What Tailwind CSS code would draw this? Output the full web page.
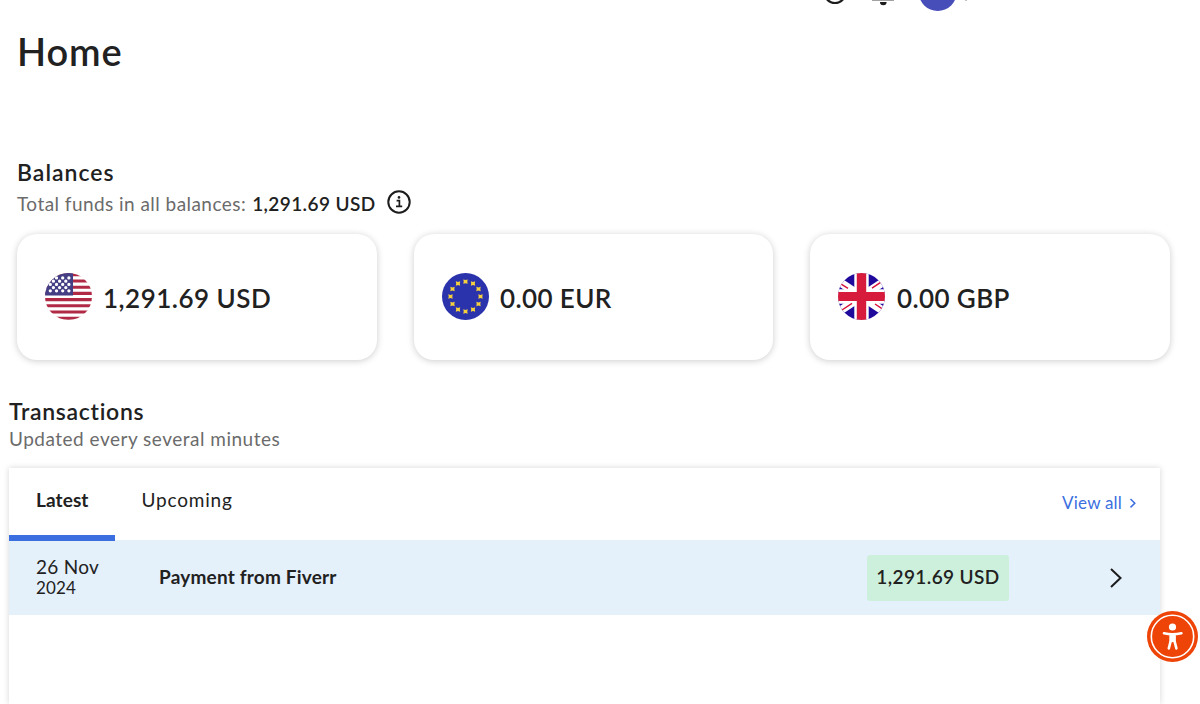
<!DOCTYPE html>
<html lang="en">
  <head>
    <meta charset="UTF-8" />
    <meta name="viewport" content="width=device-width, initial-scale=1.0" />
    <title>Home</title>
    <script src="https://cdn.jsdelivr.net/npm/@tailwindcss/browser@4"></script>
  </head>

  <body class="bg-white">
    <div
      class="relative w-[1200px] h-[704px] overflow-hidden flex flex-col font-['Lato',sans-serif] text-[#212121] whitespace-nowrap"
    >
      <!-- bottom edge of the top bar -->
      <header class="h-3 shrink-0 overflow-hidden flex items-end pl-[820px]">
        <svg class="w-[150px] h-3" viewBox="0 0 150 12" fill="none">
          <circle cx="15" cy="-7.5" r="10.5" stroke="#1c1c1c" stroke-width="2.2" />
          <path d="M52 0.2h22" stroke="#777" stroke-width="1" />
          <path d="M60 2h6.6a3.3 3.2 0 0 1-6.6 0z" fill="#1c1c1c" />
          <circle cx="117.7" cy="-8" r="19" fill="#474db9" />
          <path d="M144 -3l2 3 2-3" stroke="#555" stroke-width="1.2" />
        </svg>
      </header>

      <h1 class="mt-[15px] ml-[17px] h-12 leading-[48px] text-[38px] font-semibold tracking-[0.9px]">Home</h1>

      <section class="mt-[83px] pl-[17px]">
        <h2 class="h-7 leading-7 text-[23px] font-semibold tracking-[1px]">Balances</h2>
        <div class="flex items-center h-8 text-[19px] tracking-[0.45px]">
          <span class="pt-1 text-[#6b6b6b]">Total funds in all balances:</span>
          <span class="ml-[6px] pt-1 font-semibold tracking-[0.4px]">1,291.69 USD</span>
          <svg class="ml-[11px] w-6 h-6" viewBox="0 0 24 24" fill="none" stroke="#1c1c1c">
            <circle cx="12" cy="12" r="10.7" stroke-width="2" />
            <path d="M9.6 10.6h2.8v5.6M9 16.4h6.2" stroke-width="1.7" />
            <circle cx="12" cy="7.4" r="1.3" fill="#1c1c1c" stroke="none" />
          </svg>
        </div>

        <div class="mt-4 grid grid-cols-[359.5px_359.5px_359.5px] gap-x-[37px] text-[26px] font-semibold">
          <div class="h-[126px] pl-7 flex items-center gap-[11px] rounded-[20px] bg-white shadow-[0_1px_7px_rgba(0,0,0,0.2)]">
            <svg class="mb-px w-[47px] h-[47px]" viewBox="0 0 47 47">
              <clipPath id="us"><circle cx="23.5" cy="23.5" r="23.5" /></clipPath>
              <g clip-path="url(#us)">
                <path d="M0 0h47v47H0z" fill="#fff" />
                <path
                  d="M0 1.8h47M0 8h47M0 14.2h47M0 20.4h47M0 26.6h47M0 32.8h47M0 39h47M0 45.2h47"
                  stroke="#b12a45"
                  stroke-width="3.1"
                />
                <path d="M0 0h28v22.4H0z" fill="#443f85" />
                <g stroke="#fff" stroke-width="3.3" stroke-linecap="round">
                  <path d="M11.5 4.9h0M17.7 4.9h0M23.9 4.9h0" />
                  <path d="M8.4 8.2h0M14.6 8.2h0M20.8 8.2h0" />
                  <path d="M5.3 11.4h0M11.5 11.4h0M17.7 11.4h0M23.9 11.4h0" />
                  <path d="M8.4 14.6h0M14.6 14.6h0M20.8 14.6h0" />
                  <path d="M5.3 17.8h0M11.5 17.8h0M17.7 17.8h0M23.9 17.8h0" />
                </g>
              </g>
            </svg>
            <span class="pt-[3px] tracking-[0.5px]">1,291.69 USD</span>
          </div>

          <div class="h-[126px] pl-7 flex items-center gap-[11.5px] rounded-[20px] bg-white shadow-[0_1px_7px_rgba(0,0,0,0.2)]">
            <svg class="mb-px w-[47px] h-[47px]" viewBox="0 0 47 47">
              <defs>
                <path
                  id="star"
                  d="M-2.2-2.2L0-1.6 2.2-2.2 1.8 0 2.2 2.2 0 1.6-2.2 2.2-1.8 0z"
                  fill="#f5d13d"
                />
              </defs>
              <circle cx="23.5" cy="23.5" r="23.5" fill="#2a32ac" />
              <use href="#star" x="23.5" y="8.6" />
              <use href="#star" x="31" y="10.5" />
              <use href="#star" x="36.5" y="16" />
              <use href="#star" x="38.5" y="23.5" />
              <use href="#star" x="36.5" y="31" />
              <use href="#star" x="31" y="36.5" />
              <use href="#star" x="23.5" y="38.5" />
              <use href="#star" x="16" y="36.5" />
              <use href="#star" x="10.5" y="31" />
              <use href="#star" x="8.5" y="23.5" />
              <use href="#star" x="10.5" y="16" />
              <use href="#star" x="16" y="10.5" />
            </svg>
            <span class="pt-[3px] tracking-[0.4px]">0.00 EUR</span>
          </div>

          <div class="h-[126px] pl-7 flex items-center gap-3 rounded-[20px] bg-white shadow-[0_1px_7px_rgba(0,0,0,0.2)]">
            <svg class="mb-px w-[47px] h-[47px]" viewBox="0 0 47 47">
              <clipPath id="uk"><circle cx="23.5" cy="23.5" r="23.5" /></clipPath>
              <g clip-path="url(#uk)">
                <path d="M0 0h47v47H0z" fill="#1f0a9c" />
                <path d="M-8 2.5L55 44.5M55 2.5L-8 44.5" stroke="#fff" stroke-width="8" />
                <path d="M23.5 0v47M0 23.5h47" stroke="#fff" stroke-width="14.4" />
                <path d="M2 10.3l8 5M4 37l10-6.6M34 15.2l9-6M37 31l8 5.4" stroke="#d80f3a" stroke-width="1.4" />
                <path d="M23.5 0v47" stroke="#d61b3c" stroke-width="9.4" />
                <path d="M0 23.5h47" stroke="#d61b3c" stroke-width="9" />
              </g>
            </svg>
            <span class="pt-[3px] tracking-[0.4px]">0.00 GBP</span>
          </div>
        </div>
      </section>

      <section class="mt-[37px] pl-[9px] flex flex-col grow">
        <h2 class="h-7 leading-7 text-[23px] font-semibold tracking-[0.7px]">Transactions</h2>
        <p class="h-[26px] leading-7 text-[19px] tracking-[0.5px] text-[#6b6b6b]">Updated every several minutes</p>

        <div class="mt-[17px] w-[1151px] grow bg-white shadow-[0_0_6px_rgba(0,0,0,0.17)]">
          <div class="h-[72px] flex items-start">
            <button class="relative z-10 w-[106px] h-[73px] pl-[27px] pb-0.5 text-left text-[19px] font-bold tracking-[0.1px] border-b-[6px] border-[#3b6fe0]">Latest</button>
            <button class="ml-[26.5px] h-[65px] text-[19px] tracking-[0.8px]">Upcoming</button>
            <a class="ml-auto mr-[23px] h-[70px] flex items-center text-[17px] tracking-[0.2px] text-[#3b6fe0]">
              View all
              <svg class="ml-[7px] w-2 h-3" viewBox="0 0 8 12" fill="none" stroke="#3b6fe0" stroke-width="1.5">
                <path d="M1.5 2l4.3 4.2-4.3 4.2" />
              </svg>
            </a>
          </div>
          <div class="h-[75px] pl-[27px] flex items-center bg-[#e4f0fa]">
            <div class="w-[123px] pb-px leading-[21px]">
              <p class="text-[19px] tracking-[0.3px]">26 Nov</p>
              <p class="text-[17px] tracking-[0.1px]">2024</p>
            </div>
            <p class="w-[708px] text-[19px] font-bold tracking-[0.2px]">Payment from Fiverr</p>
            <p class="mt-px w-[142px] h-[46px] leading-[43px] text-center rounded-[3px] bg-[#cdf0dc] text-[19px] font-semibold tracking-[0.4px]">1,291.69 USD</p>
            <svg class="ml-[99.5px] w-3.5 h-5" viewBox="0 0 14 20" fill="none" stroke="#1c1c1c" stroke-width="2">
              <path d="M2 1l9.5 9L2 19" />
            </svg>
          </div>
        </div>
      </section>

      <!-- accessibility widget -->
      <button class="absolute left-[1147px] top-[611px] w-[51px] h-[51px]">
        <svg viewBox="0 0 51 51">
          <circle cx="25.5" cy="25.5" r="25.5" fill="#ee4408" />
          <circle cx="25.5" cy="25.5" r="21.2" fill="none" stroke="#fff" stroke-width="1.6" />
          <circle cx="25.5" cy="16" r="3.6" fill="#fff" />
          <path
            d="M17 22.3q8.5 1.8 17.4 0M23.8 23.5v6L21.8 37.4M27.4 23.5v6l2 7.9"
            fill="none"
            stroke="#fff"
            stroke-width="2.6"
            stroke-linecap="round"
          />
          <path d="M22.6 22.5h6v8.6h-6z" fill="#fff" />
        </svg>
      </button>
    </div>
  </body>
</html>
